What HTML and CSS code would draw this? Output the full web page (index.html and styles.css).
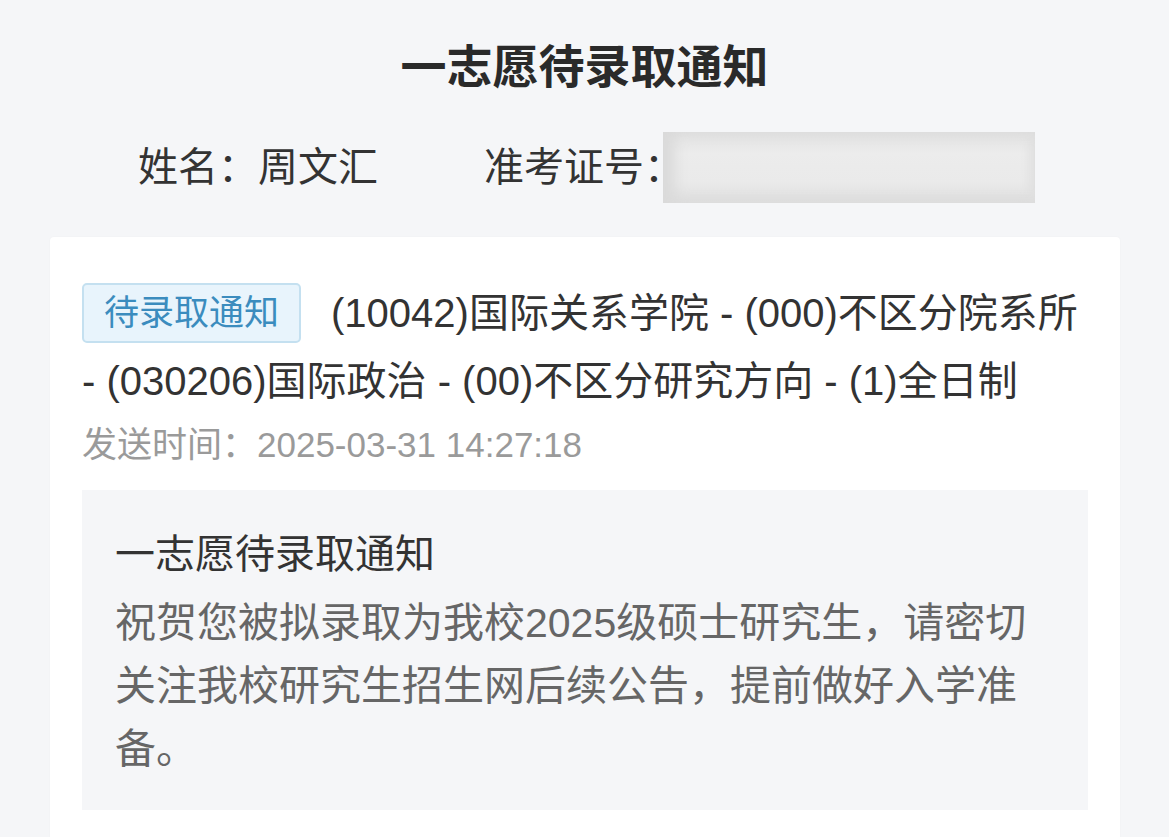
FILE: index.html
```html
<!doctype html>
<html lang="zh-CN">
	<head>
		<meta charset="utf-8">
		<meta name="viewport" content="width=device-width, initial-scale=1">
		<title>一志愿待录取通知</title>

		<link rel="stylesheet" href="styles.css">
	</head>
	<body>
		<h1 class="pageTitle">一志愿待录取通知</h1>

		<div class="student">
			<span class="studentName">姓名：周文汇</span>
			<span class="studentNo">准考证号：</span>
			<span class="hidden"></span>
		</div>

		<div class="card">
			<p class="major">
				<span class="tag">待录取通知</span>(10042)国际关系学院 - (000)不区分院系所 - (030206)国际政治 - (00)不区分研究方向 - (1)全日制
			</p>
			<p class="sendTime">发送时间：2025-03-31 14:27:18</p>

			<div class="message">
				<div class="messageTitle">一志愿待录取通知</div>
				<div class="messageText">祝贺您被拟录取为我校2025级硕士研究生，请密切关注我校研究生招生网后续公告，提前做好入学准备。</div>
			</div>
		</div>
	</body>
</html>
```

FILE: styles.css
```css
body {
	margin: 0;
	background: #f5f6f8;
	font-family: "Liberation Sans", "Noto Sans CJK SC", sans-serif;
	color: #333;
}

.pageTitle {
	margin: 0;
	padding-top: 37px;
	font-size: 46px;
	line-height: 60px;
	font-weight: bold;
	text-align: center;
	color: #2a2a2a;
}

.student {
	display: flex;
	align-items: center;
	margin-top: 35px;
	padding-left: 138px;
	font-size: 40px;
	line-height: 71px;
	color: #333;
}

.studentNo {
	margin-left: 106px;
}

.hidden {
	display: block;
	width: 372px;
	height: 71px;
	margin-left: -21px;
	background: linear-gradient(180deg, #e2e2e2 0%, #ececec 30%, #eaeaea 70%, #dedede 100%);
	box-shadow: inset 12px 0 14px #dadada, inset -6px 0 10px #e0e0e0;
}

.card {
	margin: 34px 49px 0 50px;
	padding: 42px 32px 30px;
	background: #fff;
	border-radius: 4px;
	box-shadow: 0 0 2px rgba(0, 0, 0, 0.04);
}

.major {
	margin: 0;
	font-size: 40px;
	line-height: 68px;
	color: #333;
}

.tag {
	display: inline-block;
	box-sizing: border-box;
	height: 60px;
	margin-right: 30px;
	padding: 0 20px;
	vertical-align: 2px;
	font-size: 35px;
	line-height: 56px;
	color: #3b8cbe;
	background: #e8f4fc;
	border: 2px solid #c4e0f0;
	border-radius: 5px;
}

.sendTime {
	margin: 3px 0 0;
	font-size: 35px;
	line-height: 54px;
	color: #9a9a9a;
}

.message {
	margin-top: 18px;
	padding: 34px 40px 29px 33px;
	background: #f5f6f8;
}

.messageTitle {
	font-size: 40px;
	line-height: 60px;
	color: #333;
}

.messageText {
	margin-top: 8px;
	font-size: 41px;
	line-height: 63px;
	color: #666;
}
```
